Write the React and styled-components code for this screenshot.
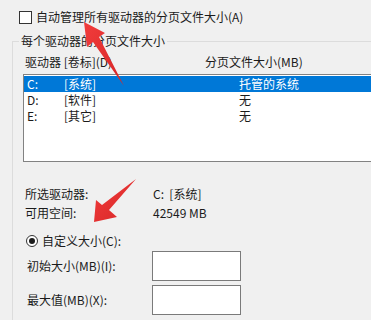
import React from "react";
import styled, { createGlobalStyle } from "styled-components";

const Global = createGlobalStyle`
  html, body { margin: 0; padding: 0; background: #f0f0f0; overflow: hidden; }
  body { font-family: "Noto Sans CJK SC", "Noto Sans", sans-serif; font-size: 12px; color: #1b1b1b; }
`;

const Page = styled.div`
  position: relative;
  width: 371px;
  height: 320px;
  overflow: hidden;
  padding: 10px 0 0 0;
  box-sizing: border-box;
`;

const CheckRow = styled.label`
  display: flex;
  align-items: center;
  gap: 4px;
  margin-left: 19px;
  height: 14px;
  line-height: 14px;
`;

const CheckBox = styled.span`
  width: 11px;
  height: 11px;
  border: 1px solid #333;
  background: #fff;
  flex: none;
`;

const Group = styled.fieldset`
  margin: 10px 0 0 12px;
  padding: 0;
  width: 420px;
  height: 320px;
  border: 1px solid #dcdcdc;
  border-right: none;
  box-sizing: border-box;
`;

const Legend = styled.legend`
  margin-left: 6px;
  padding: 0 2px;
  line-height: 14px;
`;

const HeaderRow = styled.div`
  display: flex;
  height: 16px;
  line-height: 16px;
  margin: 6px 0 0 12px;
`;

const HeaderCell = styled.span`
  width: ${(p) => p.$w}px;
  flex: none;
`;

const ListBox = styled.div`
  margin: 4px 0 0 10px;
  height: 88px;
  border: 1px solid #828282;
  border-right: none;
  background: #fff;
  padding-top: 1px;
  box-sizing: border-box;
`;

const ListRow = styled.div`
  display: flex;
  height: 16px;
  line-height: 16px;
  padding-left: 3px;
  background: ${(p) => (p.$selected ? "#0078d7" : "transparent")};
  color: ${(p) => (p.$selected ? "#fff" : "#1b1b1b")};
`;

const Cell = styled.span`
  width: ${(p) => p.$w}px;
  flex: none;
`;

const InfoGrid = styled.div`
  display: grid;
  grid-template-columns: 128px auto;
  row-gap: 3px;
  margin: 24px 0 0 12px;
  line-height: 16px;
`;

const RadioRow = styled.label`
  display: flex;
  align-items: center;
  gap: 4px;
  margin: 12px 0 0 13px;
  height: 16px;
  line-height: 16px;
`;

const Radio = styled.span`
  width: 10px;
  height: 10px;
  border: 1px solid #333;
  border-radius: 50%;
  display: flex;
  align-items: center;
  justify-content: center;
  background: #fff;
  flex: none;
  &::after {
    content: "";
    width: 6px;
    height: 6px;
    border-radius: 50%;
    background: #1b1b1b;
  }
`;

const FieldRow = styled.div`
  display: flex;
  align-items: center;
  margin: ${(p) => p.$mt}px 0 0 14px;
`;

const FieldLabel = styled.span`
  width: 125px;
  flex: none;
  line-height: 16px;
`;

const TextBox = styled.div`
  width: 89px;
  height: 30px;
  border: 1px solid #7a7a7a;
  background: #fff;
  box-sizing: border-box;
`;

const Arrows = styled.svg`
  position: absolute;
  left: 0;
  top: 0;
  pointer-events: none;
`;

export default function App() {
  return (
    <>
      <Global />
      <Page>
        <CheckRow>
          <CheckBox />
          <span>自动管理所有驱动器的分页文件大小(A)</span>
        </CheckRow>
        <Group>
          <Legend>每个驱动器的分页文件大小</Legend>
          <HeaderRow>
            <HeaderCell $w={180}>驱动器 [卷标](D)</HeaderCell>
            <HeaderCell $w={150}>分页文件大小(MB)</HeaderCell>
          </HeaderRow>
          <ListBox>
            <ListRow $selected>
              <Cell $w={37}>C:</Cell>
              <Cell $w={175}>[系统]</Cell>
              <Cell $w={120}>托管的系统</Cell>
            </ListRow>
            <ListRow>
              <Cell $w={37}>D:</Cell>
              <Cell $w={175}>[软件]</Cell>
              <Cell $w={120}>无</Cell>
            </ListRow>
            <ListRow>
              <Cell $w={37}>E:</Cell>
              <Cell $w={175}>[其它]</Cell>
              <Cell $w={120}>无</Cell>
            </ListRow>
          </ListBox>
          <InfoGrid>
            <span>所选驱动器:</span>
            <span>C:&nbsp;&nbsp;[系统]</span>
            <span>可用空间:</span>
            <span>42549 MB</span>
          </InfoGrid>
          <RadioRow>
            <Radio />
            <span>自定义大小(C):</span>
          </RadioRow>
          <FieldRow $mt={2}>
            <FieldLabel>初始大小(MB)(I):</FieldLabel>
            <TextBox />
          </FieldRow>
          <FieldRow $mt={4}>
            <FieldLabel>最大值(MB)(X):</FieldLabel>
            <TextBox />
          </FieldRow>
        </Group>
        <Arrows width="371" height="320" viewBox="0 0 371 320">
          <defs>
            <linearGradient id="ar" x1="0" y1="0" x2="1" y2="1">
              <stop offset="0" stopColor="#f23c3c" />
              <stop offset="1" stopColor="#d62626" />
            </linearGradient>
          </defs>
          <path d="M84 22 L105 33 L99 37 L124 86 L93 42 L87 47 Z" fill="url(#ar)" />
          <path d="M94 222 L96 200 L102 205 L136 179 L109 210 L117 217 Z" fill="url(#ar)" />
        </Arrows>
      </Page>
    </>
  );
}
